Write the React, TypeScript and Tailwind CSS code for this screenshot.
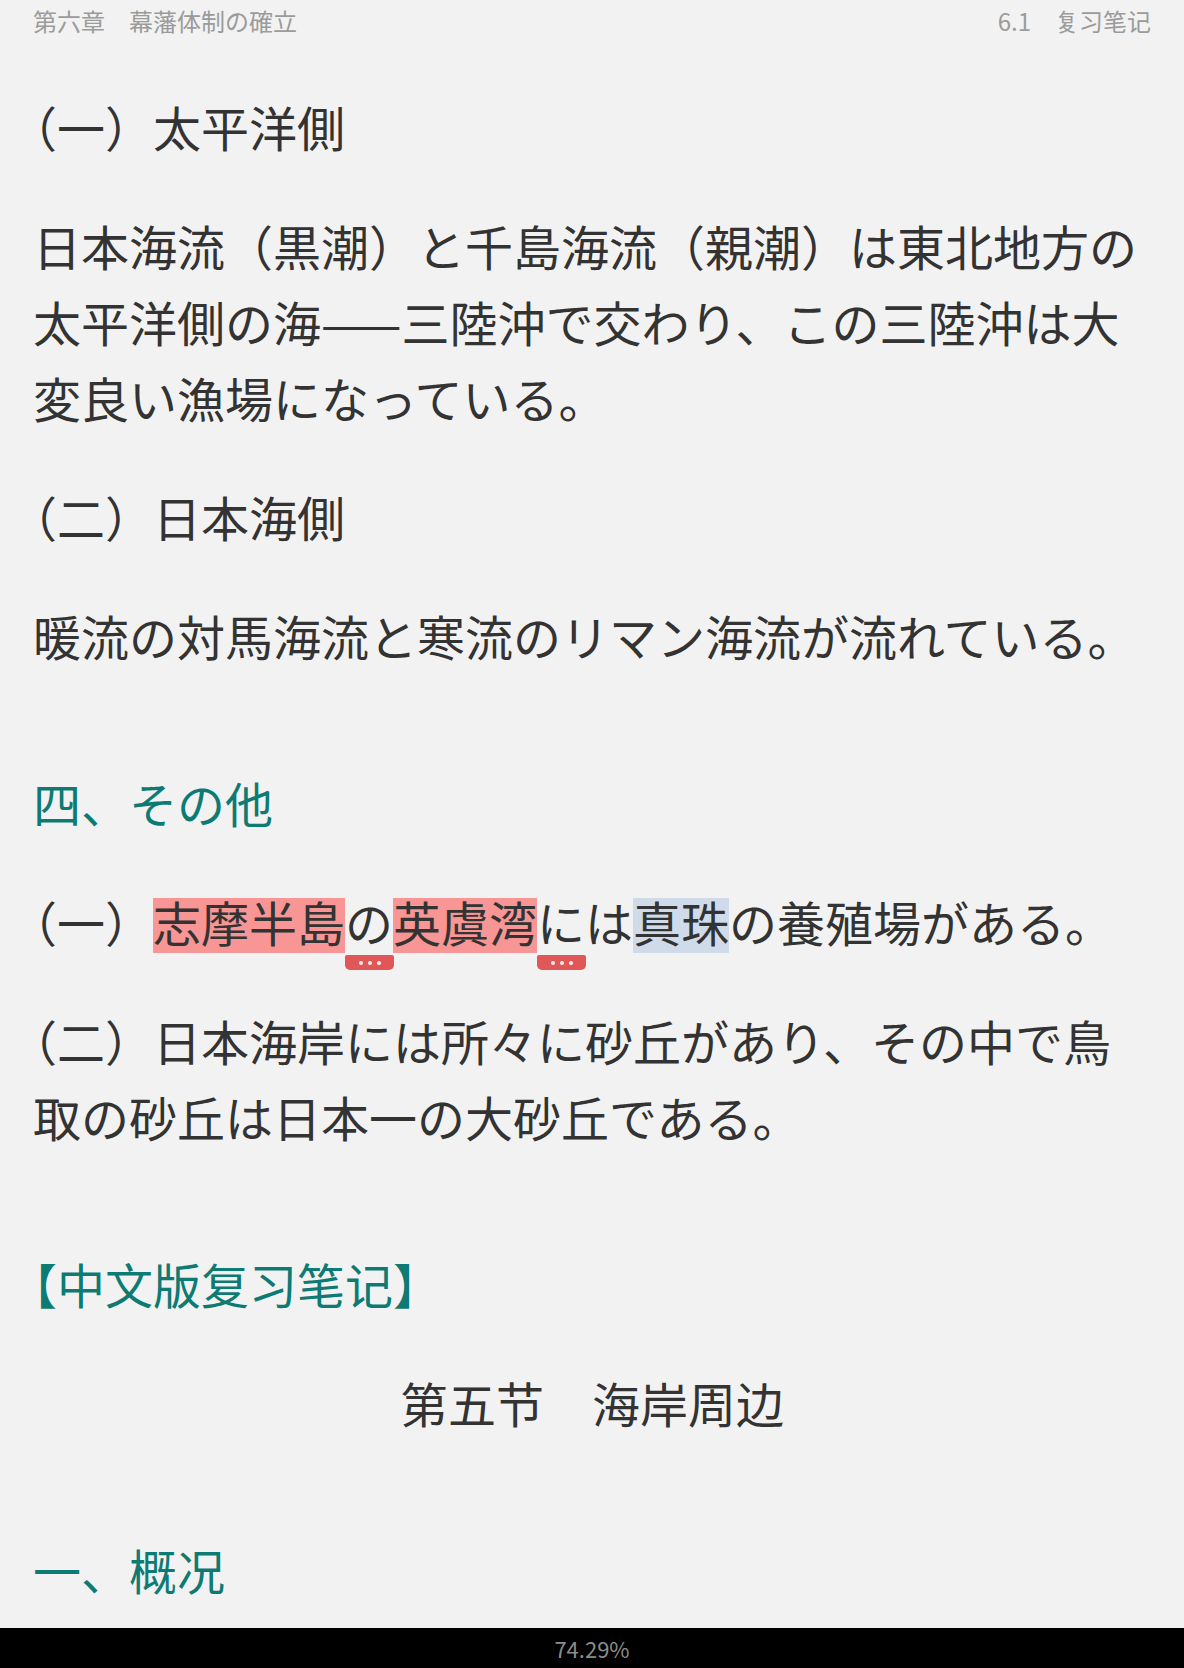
import React from 'react';

// a highlighted run of text, optionally with the little "..." note tag after it
const Mark = ({ children, tone, tag }: { children: React.ReactNode; tone: 'red' | 'blue'; tag?: boolean }) => (
  <span
    className={`relative inline-block h-[55px] pb-[8px] leading-[47px] ${
      tone === 'red' ? 'bg-[#f89595]' : 'bg-[#cfdbe8]'
    }`}
  >
    {children}
    {tag && (
      <span className="absolute left-full top-[57px] flex h-[15px] w-[49px] items-center justify-center gap-[5px] rounded-t-[2px] rounded-b-[5px] bg-[#e05757]">
        <span className="h-[4px] w-[4px] rounded-full bg-white/90" />
        <span className="h-[4px] w-[4px] rounded-full bg-white/90" />
        <span className="h-[4px] w-[4px] rounded-full bg-white/90" />
      </span>
    )}
  </span>
);

// opening bracket at line start is set half-width
const Open = ({ ch }: { ch: string }) => <span className="ml-[-24px]">{ch}</span>;

const App: React.FC = () => {
  return (
    <div className="flex h-[1668px] w-full flex-col overflow-hidden bg-[#f2f2f2] font-['Noto_Sans_CJK_JP','Noto_Sans_CJK_SC',sans-serif] text-[#333333]">
      {/* running header */}
      <div className="flex h-[42px] shrink-0 items-center justify-between px-[33px] text-[24px] text-[#9b9b9b]">
        <span>第六章　幕藩体制の確立</span>
        <span>6.1　复习笔记</span>
      </div>

      {/* flex column so the paragraph margins add up instead of collapsing */}
      <div className="flex flex-1 flex-col overflow-hidden px-[33px] pt-[46px] text-[48px]">
        <p className="mb-[43px] leading-[76px]">
          <Open ch="（" />一）太平洋側
        </p>
        <p className="mb-[43px] leading-[76px]">
          日本海流（黒潮）と千島海流（親潮）は東北地方の太平洋側の海——三陸沖で交わり、この三陸沖は大変良い漁場になっている。
        </p>
        <p className="mb-[43px] leading-[76px]">
          <Open ch="（" />二）日本海側
        </p>
        <p className="mb-[43px] leading-[76px]">暖流の対馬海流と寒流のリマン海流が流れている。</p>

        <p className="mb-[43px] mt-[48px] leading-[76px] text-[#0d7b73]">四、その他</p>
        <p className="mb-[43px] leading-[76px]">
          <Open ch="（" />一）
          <Mark tone="red" tag>志摩半島</Mark>の<Mark tone="red" tag>英虞湾</Mark>には<Mark tone="blue">真珠</Mark>の養殖場がある。
        </p>
        <p className="mb-[43px] leading-[76px]">
          <Open ch="（" />二）日本海岸には所々に砂丘があり、その中で鳥取の砂丘は日本一の大砂丘である。
        </p>

        <p className="mb-[43px] mt-[48px] font-['Noto_Sans_CJK_SC',sans-serif] leading-[76px] text-[#0d7b73]">
          <Open ch="【" />中文版复习笔记】
        </p>
        <p className="mb-[43px] text-center font-['Noto_Sans_CJK_SC',sans-serif] leading-[76px]">第五节　海岸周边</p>
        <p className="mb-[43px] mt-[48px] font-['Noto_Sans_CJK_SC',sans-serif] leading-[76px] text-[#0d7b73]">一、概况</p>
      </div>

      {/* progress bar */}
      <div className="flex h-[40px] shrink-0 items-center justify-center bg-black text-[22px] text-[#8c8c8c]">
        74.29%
      </div>
    </div>
  );
};

export default App;
